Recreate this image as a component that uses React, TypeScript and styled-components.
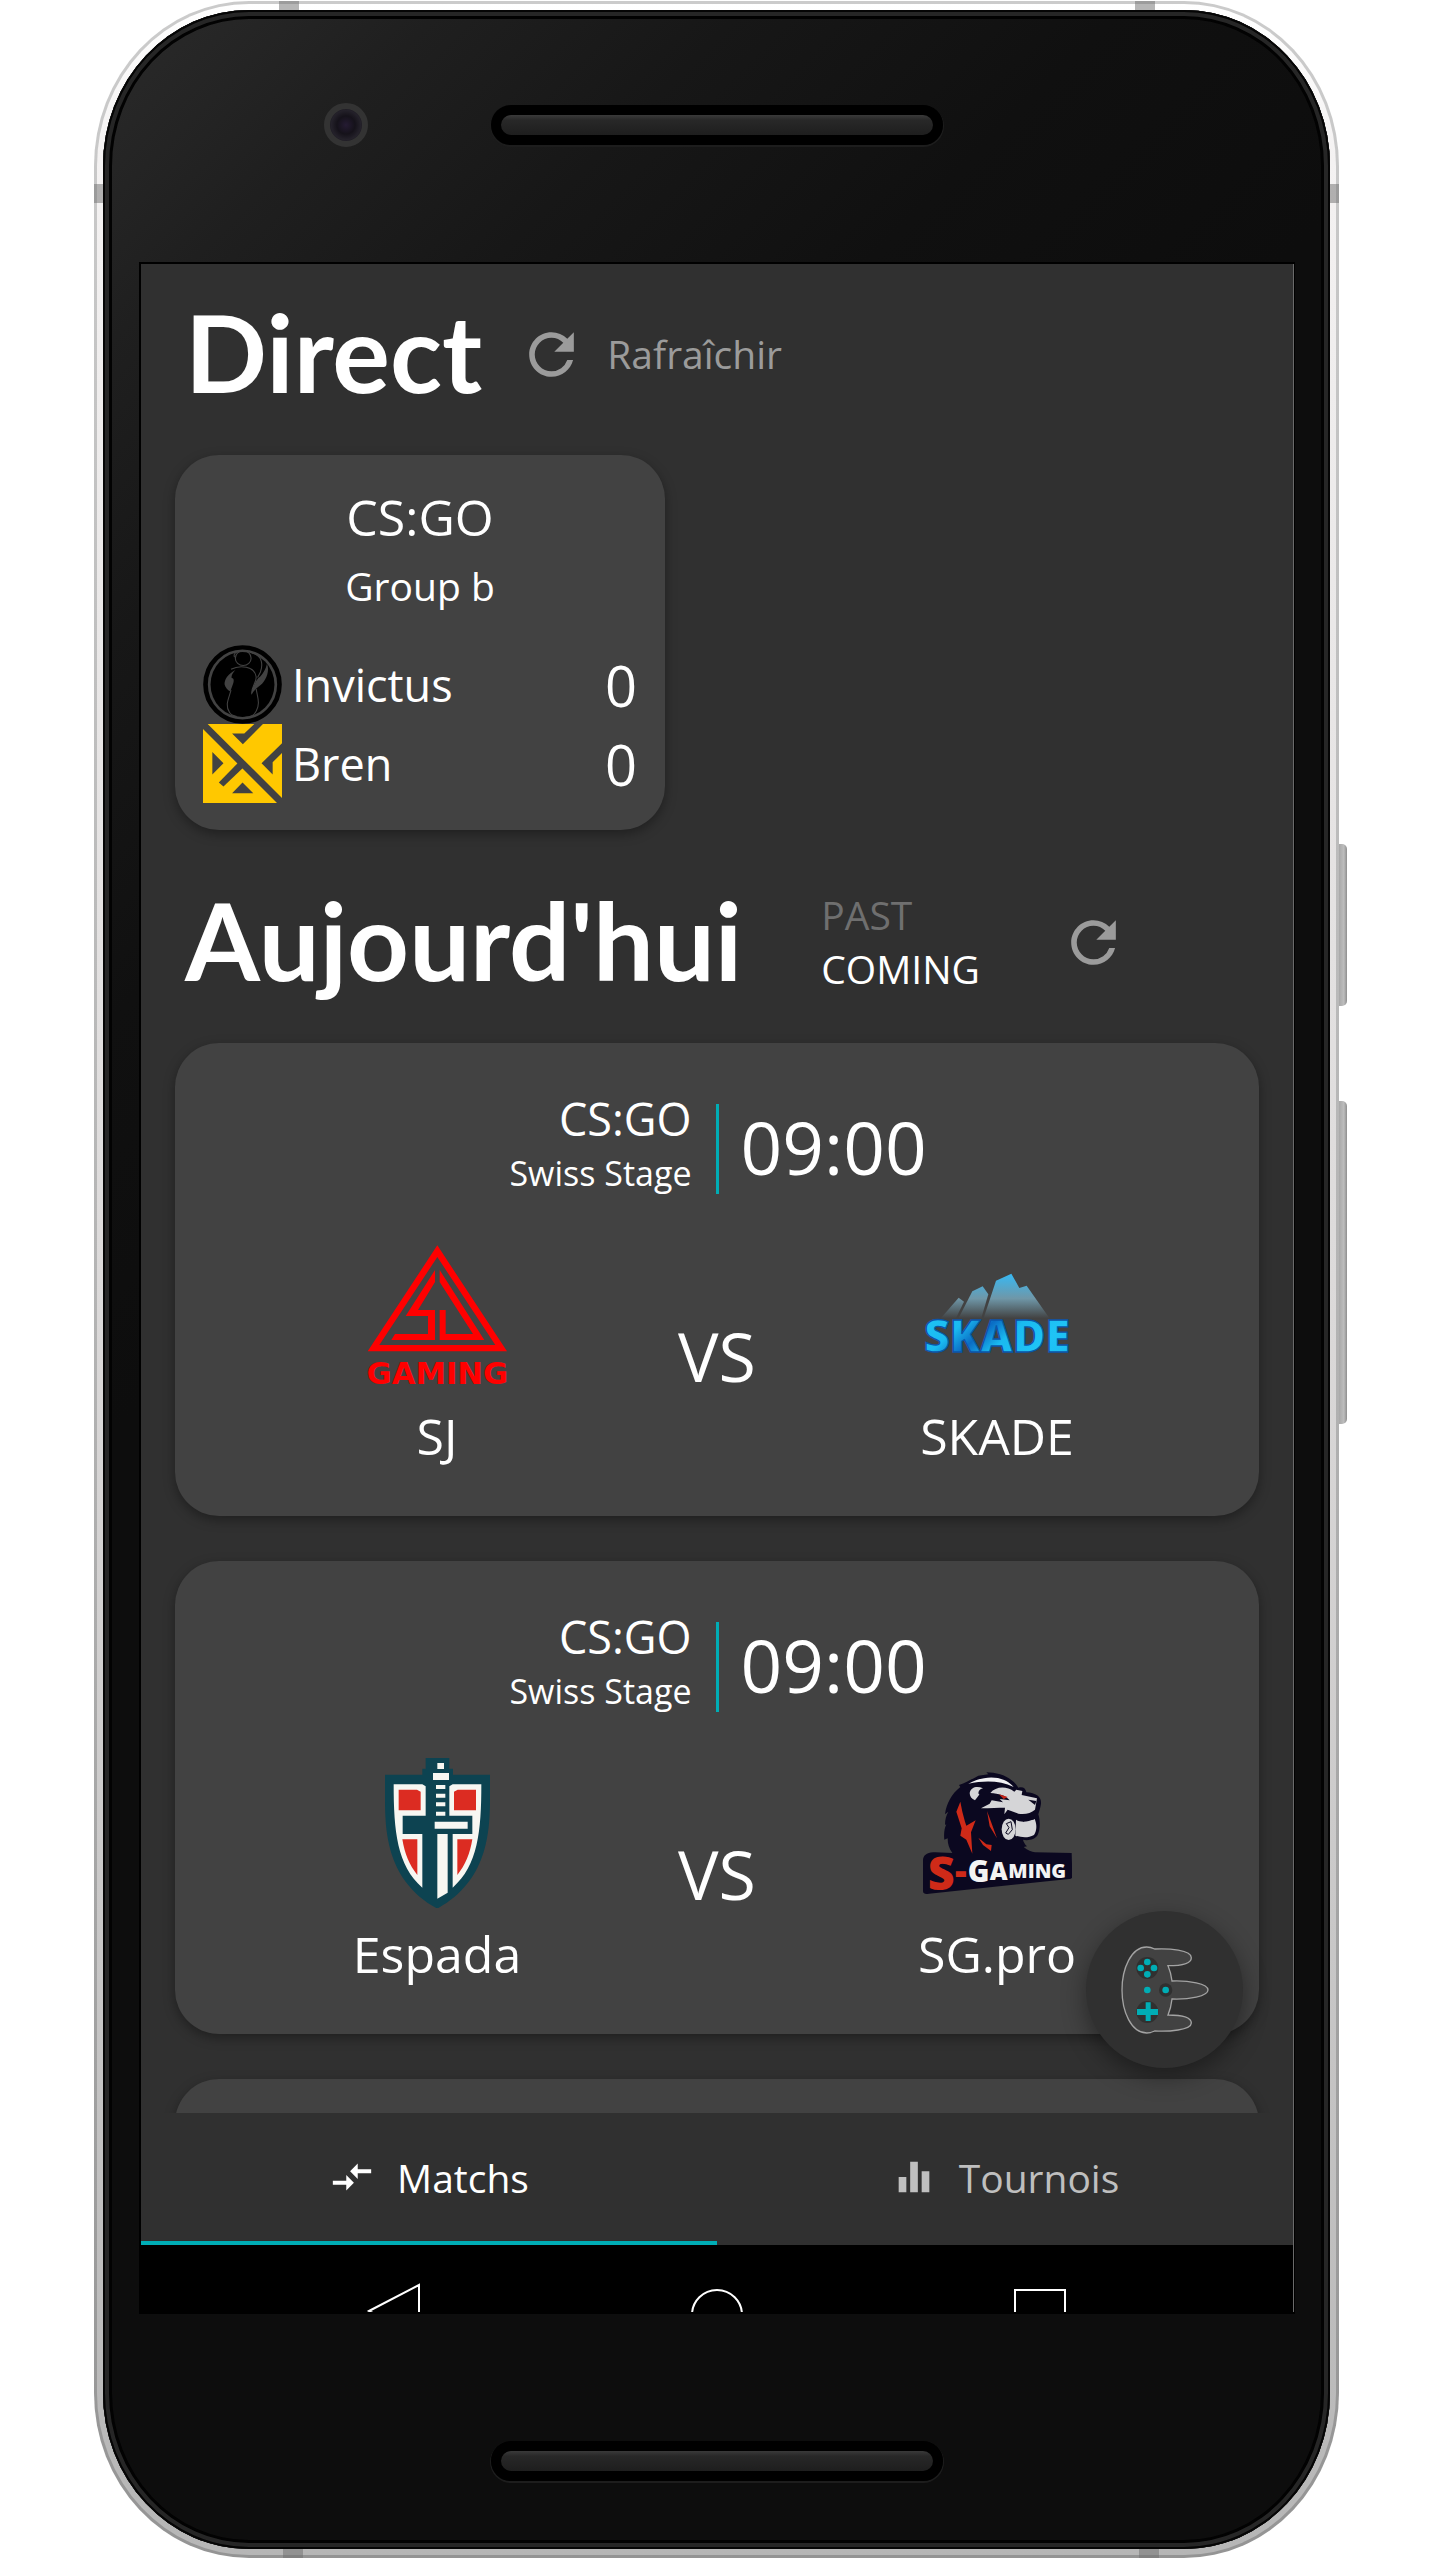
import React from "react";
import styled, { createGlobalStyle } from "styled-components";
import { MdCompareArrows, MdEqualizer, MdRefresh } from "react-icons/md";

const color = {
  screen: "#303030",
  card: "#424242",
  accent: "#00adb5",
  text: "#ffffff",
  muted: "#9b9b9b",
  faint: "#6f6f6f",
};

const GlobalStyle = createGlobalStyle`
  *, *::before, *::after { box-sizing: border-box; }
  body { margin: 0; background: #fff; }
  button {
    margin: 0; padding: 0; border: 0; background: none;
    color: inherit; font: inherit; text-align: left; cursor: pointer;
  }
  h1, h2, h3, p, ul { margin: 0; padding: 0; font-weight: 400; list-style: none; }
  svg { display: block; flex: none; }
`;

/* ---------- Device ---------- */

const Page = styled.div`
  display: flex;
  padding: 1px 93px 2px 94px;
  font-family: "Open Sans", "Noto Sans", sans-serif;
  color: ${color.text};
`;

const Frame = styled.div`
  position: relative;
  flex: 1;
  min-width: 0;
  padding: 3px;
  border-radius: 155px / 165px;
  background: linear-gradient(#cbcbcb, #b4b4b4 50%, #949494);
`;

const Chassis = styled.div`
  padding: 6px;
  border-radius: 152px / 162px;
  background: linear-gradient(#fff, #f4f2f2 6%, #dcdada 50%, #b6b6b6);
`;

const Glass = styled.div`
  padding: 0 37px 0 38px;
  border-radius: 146px / 156px;
  background: linear-gradient(135deg, #2b2b2b, #1f1f1f 9%, #171717 17%, #101010 27%, #0d0d0d 38%);
  box-shadow: inset 0 0 0 2px #050505, inset 0 0 0 6px #262626, inset 0 0 0 9px #020202;
`;

const Antenna = styled.span<{ $side: "top" | "bottom" | "left" | "right"; $at: string }>`
  position: absolute;
  background: rgba(110, 110, 110, 0.5);
  ${(p) =>
    p.$side === "top" || p.$side === "bottom"
      ? `${p.$side}: 0; left: ${p.$at}; width: 20px; height: 9px;`
      : `${p.$side}: 0; top: ${p.$at}; width: 9px; height: 19px;`}
`;

const SideKeys = styled.div`
  display: flex;
  flex-direction: column;
  gap: 95px;
  flex: none;
  width: 8px;
  padding-top: 843px;
`;

const SideKey = styled.span<{ $length: number }>`
  height: ${(p) => p.$length}px;
  border-radius: 0 5px 5px 0;
  background: linear-gradient(90deg, #a8a8a8, #bdbdbd 60%, #8e8e8e);
`;

const TopBezel = styled.div`
  display: grid;
  grid-template-columns: 1fr auto 1fr;
  align-items: center;
  height: 254px;
  padding-bottom: 24px;
`;

const BottomBezel = styled.div`
  display: flex;
  align-items: center;
  justify-content: center;
  height: 237px;
  padding-top: 60px;
`;

const Camera = styled.span`
  justify-self: end;
  width: 44px;
  height: 44px;
  margin-right: 123px;
  border: 6px solid #333;
  border-radius: 50%;
  background: radial-gradient(circle at 50% 50%, #251b33, #15121a 40%, #24212a 65%, #0c0b0e);
`;

const Speaker = styled.span`
  width: 452px;
  height: 40px;
  border: 10px solid #000;
  border-radius: 20px;
  background: linear-gradient(#3a3a3a, #282828 25%, #1e1e1e);
  box-shadow: 0 1px 0 1px #1d1d1d;
`;

/* ---------- Screen ---------- */

const Screen = styled.div`
  position: relative;
  display: flex;
  flex-direction: column;
  aspect-ratio: 9 / 16;
  overflow: hidden;
  background: ${color.screen};
`;

const ScreenEdge = styled.div`
  box-shadow: 1px 0 0 #6a6a6a, 0 0 0 2px #000;
`;

const Content = styled.main`
  flex: 1;
  min-height: 0;
  padding: 0 34px;
  overflow: hidden;
`;

const SectionHeader = styled.header<{ $height: number; $top?: number; $bottom?: number }>`
  display: flex;
  align-items: center;
  height: ${(p) => p.$height}px;
  padding: ${(p) => p.$top ?? 0}px 0 ${(p) => p.$bottom ?? 0}px 10px;
`;

const Title = styled.h1`
  padding-bottom: 6px;
  font-family: Lato, "Open Sans", sans-serif;
  font-size: 108px;
  font-weight: 700;
  line-height: 136px;
  white-space: nowrap;
`;

const RefreshButton = styled.button<{ $gap: number }>`
  display: flex;
  align-items: center;
  gap: 22px;
  margin-left: ${(p) => p.$gap}px;
  color: ${color.muted};
  font-size: 39px;
  line-height: 54px;
`;

const FilterGroup = styled.div`
  display: flex;
  flex-direction: column;
  margin-left: 79px;
`;

const Filter = styled.button<{ $active?: boolean }>`
  color: ${(p) => (p.$active ? color.text : color.faint)};
  font-size: 39px;
  line-height: 54px;
`;

const Card = styled.article`
  border-radius: 44px;
  background: ${color.card};
  box-shadow: 0 4px 12px rgba(0, 0, 0, 0.35);
`;

const LiveCard = styled(Card)`
  width: 490px;
  max-width: 100%;
  padding: 28px 28px 27px;
`;

const Game = styled.h2`
  font-size: 50px;
  line-height: 68px;
  text-align: center;
`;

const Stage = styled.p`
  margin-top: 8px;
  font-size: 39px;
  line-height: 54px;
  text-align: center;
`;

const LiveTeams = styled.ul`
  margin-top: 32px;
`;

const LiveTeam = styled.li`
  display: flex;
  align-items: center;
  gap: 10px;
  height: 79px;
  font-size: 45px;
`;

const Score = styled.span`
  margin-left: auto;
  font-size: 56px;
`;

const MatchList = styled.div`
  display: flex;
  flex-direction: column;
  gap: 45px;
`;

const MatchCard = styled(Card)`
  min-height: 473px;
  padding: 49px 0 46px;
`;

const MatchInfo = styled.header`
  display: grid;
  grid-template-columns: 1fr 3px 1fr;
  align-items: center;
  column-gap: 22px;
  height: 108px;
`;

const MatchLabel = styled.div`
  padding-right: 2px;
  text-align: right;
  line-height: 54px;
`;

const MatchGame = styled.h2`
  font-size: 45px;
`;

const MatchStage = styled.p`
  font-size: 34px;
`;

const Divider = styled.span`
  align-self: end;
  height: 90px;
  margin-bottom: 6px;
  background: ${color.accent};
`;

const Time = styled.time`
  font-size: 73px;
`;

const Versus = styled.div`
  display: grid;
  grid-template-columns: repeat(3, 1fr);
  align-items: center;
  justify-items: center;
  margin-top: 40px;
  padding: 0 122px;
  font-size: 68px;
`;

const Team = styled.div`
  display: flex;
  flex-direction: column;
  align-items: center;
  gap: 12px;
`;

const TeamName = styled.h3`
  font-size: 50px;
  line-height: 68px;
`;

const Fab = styled.button`
  position: absolute;
  right: 50px;
  bottom: 244px;
  display: flex;
  align-items: center;
  justify-content: center;
  width: 157px;
  height: 157px;
  border-radius: 50%;
  background: ${color.screen};
  box-shadow: 0 8px 24px rgba(0, 0, 0, 0.4);
`;

const Tabs = styled.nav`
  display: grid;
  grid-template-columns: 1fr 1fr;
  height: 132px;
  background: ${color.screen};
`;

const Tab = styled.button<{ $active?: boolean }>`
  display: flex;
  align-items: center;
  justify-content: center;
  gap: 22px;
  border-bottom: 4px solid ${(p) => (p.$active ? color.accent : "transparent")};
  color: ${(p) => (p.$active ? color.text : "#bfbfbf")};
  font-size: 39px;
`;

const SystemBar = styled.div`
  display: grid;
  grid-template-columns: repeat(3, 1fr);
  justify-items: center;
  height: 67px;
  padding: 38px 8% 0;
  overflow: hidden;
  background: #000;
`;

const SystemButton = styled.button`
  height: 60px;
`;

/* ---------- Logos ---------- */

const InvictusLogo = () => (
  <svg width="79" height="79" viewBox="0 0 220 234" preserveAspectRatio="none" aria-hidden="true">
    <ellipse cx="110" cy="117" rx="103" ry="110" fill="none" stroke="#000" strokeWidth="13" />
    <ellipse cx="110" cy="117" rx="89" ry="96" fill="#000" />
    <g fill="none" stroke="#424242" strokeWidth="3">
      <circle cx="112" cy="39" r="22" />
      <path d="M88 36c-4-8 2-14 8-16M136 24c32 6 30 38 24 56l-8 16" />
      <path d="M78 72c24-14 66-10 70 22 2 16-14 30-12 50M148 130c4 26 12 44 0 66-6 14-18 18-30 18" />
      <path d="M78 134c-6 24-18 44-4 66 4 8 12 10 20 12" />
    </g>
    <path d="M60 116c0-14 8-28 30-42-8 10-12 18-10 24 8 0 6 12 2 22l-6 18c-8-6-14-12-16-22zM178 56c10 22-6 56-22 66-10 8-16 16-22 26 2-20 10-36 20-50 14-12 20-26 24-42z" fill="#424242" />
  </svg>
);

const BrenLogo = () => (
  <svg width="79" height="79" viewBox="175 850 220 235" preserveAspectRatio="none" aria-hidden="true">
    <path fill="#ffc800" d="M175 850h220v235H175z" />
    <g fill="#424242">
      <path d="M175 850h13l207 220v15h-14L175 865z" />
      <path d="M318 850h24l-56 60-30-32h34z" />
      <path d="M395 907v29l-26 28v36l-31-33zM201 933l31 34-31 33zM285 1024l30 32h-59z" />
      <path d="M272 966l14 15-54 55-13-12z" />
    </g>
  </svg>
);

const SjLogo = () => (
  <svg width="150" height="150" viewBox="66 57 450 450" aria-hidden="true">
    <g fill="#ff0000">
      <path fillRule="evenodd" d="M292 73l209 318H83zM292 108L118 372h348z" />
      <path d="M285 147v36l-51 84h51v90H154l11-18h99v-54h-67z" />
      <path d="M299 147l134 210H299v-90h18v72h82L299 183z" />
      <text x="292" y="490" textAnchor="middle" fontFamily="DejaVu Sans, sans-serif" fontWeight="700" fontSize="92">
        GAMING
      </text>
    </g>
  </svg>
);

const SkadeLogo = () => (
  <svg width="150" height="150" viewBox="123 57 450 450" aria-hidden="true">
    <defs>
      <linearGradient id="skade-peak" gradientUnits="userSpaceOnUse" x1="0" y1="160" x2="0" y2="292">
        <stop offset="0" stopColor="#38b8f2" />
        <stop offset="0.55" stopColor="#6f97a8" />
        <stop offset="1" stopColor="#424242" />
      </linearGradient>
      <linearGradient id="skade-word" gradientUnits="userSpaceOnUse" x1="130" y1="290" x2="230" y2="400" spreadMethod="reflect">
        <stop offset="0" stopColor="#1fc4f6" />
        <stop offset="0.6" stopColor="#1abaf0" />
        <stop offset="1" stopColor="#0a6cc4" />
      </linearGradient>
    </defs>
    <g fill="url(#skade-peak)">
      <path d="M180 291l53-61 16 12-24 49z" />
      <path d="M233 291l41-80 31-15 17 24-21 71z" />
      <path d="M308 291l37-112 46-21 24 43 22-7 68 97z" />
    </g>
    <text x="348" y="393" textAnchor="middle" fontFamily="Open Sans, sans-serif" fontWeight="800" fontSize="134" fill="url(#skade-word)" stroke="#0b55aa" strokeWidth="4">
      SKADE
    </text>
  </svg>
);

const EspadaLogo = () => (
  <svg width="150" height="150" viewBox="66 81 450 450" aria-hidden="true">
    <path fill="#0d4351" d="M257 81h71v32h11v18h111v70c0 110-10 250-158 332-148-82-157-222-157-332v-70h112v-18h10z" />
    <path fill="#f7f7f2" d="M161 160h86l10 6v88h-69v55h59v161c-76-66-86-170-86-310zM424 160h-86l-10 6v88h69v55h-59v161c76-66 86-170 86-310z" />
    <g fill="#dc2c22">
      <path d="M176 176h55l11 6v56h-66zM408 176h-55l-11 6v56h66zM187 325h45v107c-24-30-38-64-45-107zM397 325h-45v107c24-30 38-64 45-107z" />
    </g>
    <g fill="#f7f7f2">
      <path d="M292 96h20v18h-20zM279 126h48v21h-48zM288 162h28v12h-28zM288 188h28v12h-28zM288 214h28v12h-28zM288 242h28v12h-28zM284 272h99v21h-99zM292 309h31v176l-31 18z" />
    </g>
  </svg>
);

const SGamingLogo = () => (
  <svg width="150" height="150" viewBox="123 81 450 450" aria-hidden="true">
    <path
      fill="#0b0820"
      d="M214 366c-10-14-14-26-14-44l-10 4c-2-18 0-34 6-46l-4 2c0-18 4-30 10-40l-10 8c4-32 20-62 46-82l-4-6c22-8 40-18 58-28l30-4-6-6c42 0 80 18 96 46 14-4 22 2 24 14 30 2 46 14 44 34-2 14-6 24-8 32 6 20 6 44-2 62-8 14-30 18-44 14 2 8 6 14 12 20l-10 2c12 10 24 14 34 16l110 2 2 70c0 6-4 8-10 8l-420 44c-8 2-18 2-18-8v-92c0-14 12-26 36-24z"
    />
    <g fill="#d5d5d7">
      <path d="M262 158c48-26 106-26 136 10-40-20-88-20-136-10z" fill="#f1f1f3" />
      <path d="M266 186c4-18 22-22 40-14-10 2-14 8-14 16 8 0-2 8-10 20-10-4-16-12-16-22z" />
      <path d="M328 186c16-20 48-22 72-4l6-6 18 4-2 12 46 10-6 34c-12 10-30 16-50 12l-32-12-10 14 2-20c-20 0-44 2-72 2l26-14 6-10 34 6-10-10 30 4c-14-16-32-20-58-22z" />
      <path d="M405 266c16 10 36 6 56-2 8 18 6 36-2 48-18 10-36 8-56 2z" />
      <ellipse cx="383" cy="295" rx="21" ry="32" />
    </g>
    <path d="M376 278l14-6 4 24-12 14-8-4 10-16z" fill="none" stroke="#0b0820" strokeWidth="3" />
    <path d="M398 258l20-4 10 14 12-10 18 6" fill="none" stroke="#0b0820" strokeWidth="6" />
    <path d="M442 206l24 4-4 12z" fill="#0b0820" />
    <path d="M354 190l26 8-12 6z" fill="#c92316" />
    <g fill="#cf2a18">
      <path d="M238 212l6 30 8 30 4 12 28-16-14 36 4 64-18-42-18-12 4-22-16-50z" />
      <path d="M318 240l12 32 18 50-22-36zM292 320l24 20 16 2-2 18-24-18z" />
    </g>
    <text y="477" fontFamily="Open Sans, sans-serif" fontWeight="800" fill="#cf2a18">
      <tspan x="140" fontSize="140">S</tspan>
      <tspan x="222" y="458" fontSize="110">-</tspan>
    </text>
    <text fontFamily="Open Sans, sans-serif" fontWeight="800" fill="#f3f3f3">
      <tspan x="260" y="452" fontSize="88">G</tspan>
      <tspan x="326" y="447" fontSize="74">A</tspan>
      <tspan x="382" y="441" fontSize="60">MING</tspan>
    </text>
  </svg>
);

const ControllerIcon = () => (
  <svg width="92" height="92" viewBox="714 641 276 276" aria-hidden="true">
    <path
      d="M797 650c-46 0-74 64-74 129s28 129 74 129c10 0 16-2 24-6 40 2 110-2 110-24 0-20-40-24-70-24 6-14 10-30 12-48 50 2 108-8 108-27s-58-29-108-27c-2-18-6-32-12-46 30 0 70-4 70-24 0-24-68-28-110-26-8-4-14-6-24-6z"
      fill="#424242"
      stroke="#a3a3a3"
      strokeWidth="4"
    />
    <g fill={color.screen}>
      <circle cx="799" cy="713" r="33" />
      <circle cx="799" cy="845" r="33" />
      <circle cx="854" cy="779" r="20" />
    </g>
    <g fill={color.accent}>
      <circle cx="799" cy="695" r="10" />
      <circle cx="799" cy="732" r="10" />
      <circle cx="779" cy="713" r="10" />
      <circle cx="819" cy="713" r="10" />
      <circle cx="799" cy="779" r="10" />
      <circle cx="854" cy="779" r="10" />
      <path d="M794 816h15v20h22v18h-22v18h-15v-18h-26v-18h26z" />
    </g>
  </svg>
);

/* ---------- App ---------- */

type Side = { name: string; logo: React.ReactNode };
type Match = { home: Side; away: Side };

const live = [
  { name: "Invictus", score: 0, logo: <InvictusLogo /> },
  { name: "Bren", score: 0, logo: <BrenLogo /> },
];

const matches: Match[] = [
  { home: { name: "SJ", logo: <SjLogo /> }, away: { name: "SKADE", logo: <SkadeLogo /> } },
  { home: { name: "Espada", logo: <EspadaLogo /> }, away: { name: "SG.pro", logo: <SGamingLogo /> } },
];

const TeamBlock = ({ side }: { side: Side }) => (
  <Team>
    {side.logo}
    <TeamName>{side.name}</TeamName>
  </Team>
);

export default function App() {
  return (
    <>
      <GlobalStyle />
      <Page>
        <Frame>
          <Chassis>
            <Glass>
              <TopBezel>
                <Camera />
                <Speaker />
              </TopBezel>
              <ScreenEdge>
                <Screen>
                  <Content>
                    <section>
                      <SectionHeader $height={191} $bottom={11}>
                        <Title>Direct</Title>
                        <RefreshButton $gap={36}>
                          <MdRefresh size={67} aria-hidden="true" />
                          Rafraîchir
                        </RefreshButton>
                      </SectionHeader>
                      <LiveCard>
                        <Game>CS:GO</Game>
                        <Stage>Group b</Stage>
                        <LiveTeams>
                          {live.map((team) => (
                            <LiveTeam key={team.name}>
                              {team.logo}
                              {team.name}
                              <Score>{team.score}</Score>
                            </LiveTeam>
                          ))}
                        </LiveTeams>
                      </LiveCard>
                    </section>
                    <section>
                      <SectionHeader $height={213} $top={11}>
                        <Title>Aujourd'hui</Title>
                        <FilterGroup>
                          <Filter>PAST</Filter>
                          <Filter $active>COMING</Filter>
                        </FilterGroup>
                        <RefreshButton $gap={80} aria-label="Rafraîchir">
                          <MdRefresh size={67} aria-hidden="true" />
                        </RefreshButton>
                      </SectionHeader>
                      <MatchList>
                        {matches.map((match) => (
                          <MatchCard key={match.home.name}>
                            <MatchInfo>
                              <MatchLabel>
                                <MatchGame>CS:GO</MatchGame>
                                <MatchStage>Swiss Stage</MatchStage>
                              </MatchLabel>
                              <Divider />
                              <Time>09:00</Time>
                            </MatchInfo>
                            <Versus>
                              <TeamBlock side={match.home} />
                              VS
                              <TeamBlock side={match.away} />
                            </Versus>
                          </MatchCard>
                        ))}
                        <MatchCard />
                      </MatchList>
                    </section>
                  </Content>
                  <Fab aria-label="Jeux">
                    <ControllerIcon />
                  </Fab>
                  <Tabs>
                    <Tab $active>
                      <MdCompareArrows size={46} aria-hidden="true" />
                      Matchs
                    </Tab>
                    <Tab>
                      <MdEqualizer size={46} aria-hidden="true" />
                      Tournois
                    </Tab>
                  </Tabs>
                  <SystemBar>
                    <SystemButton aria-label="Retour">
                      <svg width="56" height="60" fill="none" stroke="#fff" strokeWidth="2">
                        <path d="M3 28L53 2v52z" />
                      </svg>
                    </SystemButton>
                    <SystemButton aria-label="Accueil">
                      <svg width="56" height="60" fill="none" stroke="#fff" strokeWidth="2">
                        <circle cx="28" cy="32" r="25" />
                      </svg>
                    </SystemButton>
                    <SystemButton aria-label="Applications">
                      <svg width="56" height="60" fill="none" stroke="#fff" strokeWidth="2">
                        <path d="M3 7h50v50H3z" />
                      </svg>
                    </SystemButton>
                  </SystemBar>
                </Screen>
              </ScreenEdge>
              <BottomBezel>
                <Speaker />
              </BottomBezel>
            </Glass>
          </Chassis>
          <Antenna $side="top" $at="185px" />
          <Antenna $side="top" $at="calc(100% - 204px)" />
          <Antenna $side="left" $at="183px" />
          <Antenna $side="right" $at="183px" />
          <Antenna $side="bottom" $at="189px" />
          <Antenna $side="bottom" $at="calc(100% - 200px)" />
        </Frame>
        <SideKeys>
          <SideKey $length={162} />
          <SideKey $length={323} />
        </SideKeys>
      </Page>
    </>
  );
}
